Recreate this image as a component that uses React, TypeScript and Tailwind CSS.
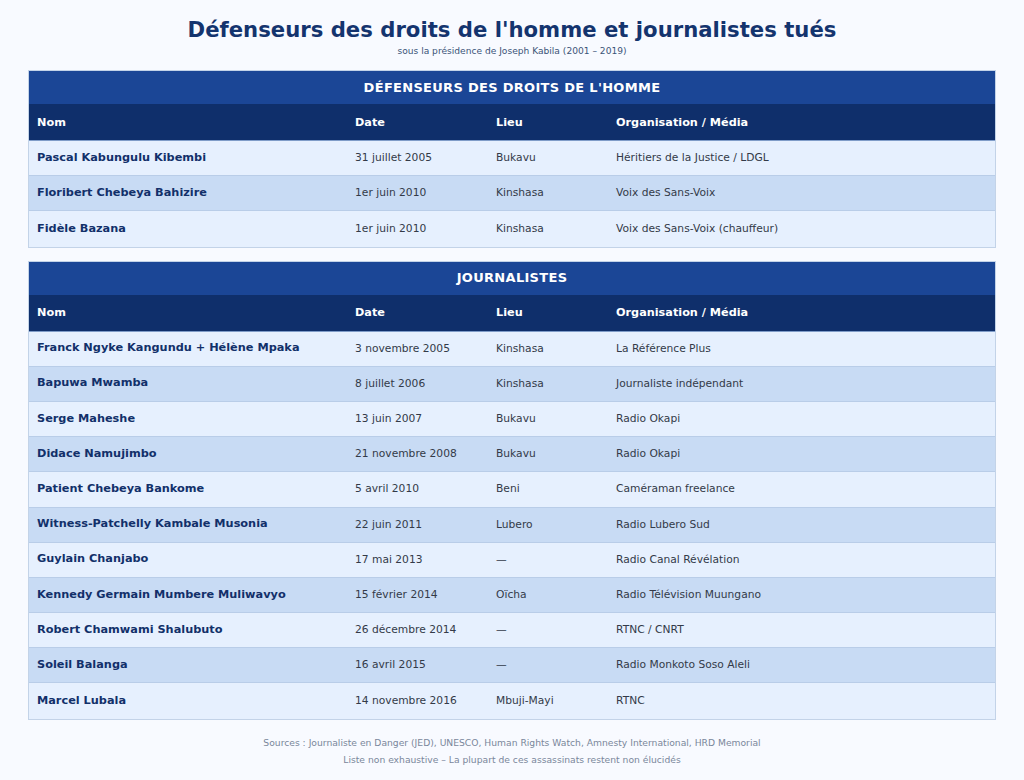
const defenders = [
  ["Pascal Kabungulu Kibembi", "31 juillet 2005", "Bukavu", "Héritiers de la Justice / LDGL"],
  ["Floribert Chebeya Bahizire", "1er juin 2010", "Kinshasa", "Voix des Sans-Voix"],
  ["Fidèle Bazana", "1er juin 2010", "Kinshasa", "Voix des Sans-Voix (chauffeur)"],
];

const journalists = [
  ["Franck Ngyke Kangundu + Hélène Mpaka", "3 novembre 2005", "Kinshasa", "La Référence Plus"],
  ["Bapuwa Mwamba", "8 juillet 2006", "Kinshasa", "Journaliste indépendant"],
  ["Serge Maheshe", "13 juin 2007", "Bukavu", "Radio Okapi"],
  ["Didace Namujimbo", "21 novembre 2008", "Bukavu", "Radio Okapi"],
  ["Patient Chebeya Bankome", "5 avril 2010", "Beni", "Caméraman freelance"],
  ["Witness-Patchelly Kambale Musonia", "22 juin 2011", "Lubero", "Radio Lubero Sud"],
  ["Guylain Chanjabo", "17 mai 2013", "—", "Radio Canal Révélation"],
  ["Kennedy Germain Mumbere Muliwavyo", "15 février 2014", "Oïcha", "Radio Télévision Muungano"],
  ["Robert Chamwami Shalubuto", "26 décembre 2014", "—", "RTNC / CNRT"],
  ["Soleil Balanga", "16 avril 2015", "—", "Radio Monkoto Soso Aleli"],
  ["Marcel Lubala", "14 novembre 2016", "Mbuji-Mayi", "RTNC"],
];

function Section({ title, rows }: { title: string; rows: string[][] }) {
  return (
    <div className="border border-[#c3d3e8]">
      <div className="h-[33px] bg-[#1b4696] flex items-center justify-center text-white text-[13px] font-bold tracking-[0.3px]">
        {title}
      </div>
      <div className="grid grid-cols-[318px_141px_120px_1fr] h-[37px] pt-[2px] items-center bg-[#0f2f6b] text-white text-[11.25px] font-bold border-b border-[#7f9cc8]">
        <div className="pl-2">Nom</div>
        <div className="pl-2">Date</div>
        <div className="pl-2">Lieu</div>
        <div className="pl-2">Organisation / Média</div>
      </div>
      {rows.map((r, i) => (
        <div
          key={r[0]}
          className={`grid grid-cols-[318px_141px_120px_1fr] h-[35.2px] items-center text-[10.7px] text-[#333a48] ${
            i % 2 === 0 ? "bg-[#e6f0fe]" : "bg-[#c8dbf4]"
          } ${i < rows.length - 1 ? "border-b border-[#b9cde8]" : ""}`}
        >
          <div className="pl-2 font-bold text-[11.3px] text-[#12306a]">{r[0]}</div>
          <div className="pl-2">{r[1]}</div>
          <div className="pl-2">{r[2]}</div>
          <div className="pl-2">{r[3]}</div>
        </div>
      ))}
    </div>
  );
}

export default function App() {
  return (
    <div className="min-h-[780px] bg-[#f8faff] px-7 pt-[15px] font-['DejaVu_Sans',sans-serif]">
      <h1 className="text-center text-[21.2px] font-bold text-[#14346e] leading-[30px]">
        Défenseurs des droits de l'homme et journalistes tués
      </h1>
      <p className="text-center text-[9.1px] text-[#3b5478] leading-[12px]">
        sous la présidence de Joseph Kabila (2001 – 2019)
      </p>
      <div className="mt-[13px] flex flex-col gap-[13px]">
        <Section title="DÉFENSEURS DES DROITS DE L'HOMME" rows={defenders} />
        <Section title="JOURNALISTES" rows={journalists} />
      </div>
      <div className="mt-[14px] text-center text-[9.2px] text-[#7a879b] leading-[17px]">
        <p>Sources : Journaliste en Danger (JED), UNESCO, Human Rights Watch, Amnesty International, HRD Memorial</p>
        <p>Liste non exhaustive – La plupart de ces assassinats restent non élucidés</p>
      </div>
    </div>
  );
}
